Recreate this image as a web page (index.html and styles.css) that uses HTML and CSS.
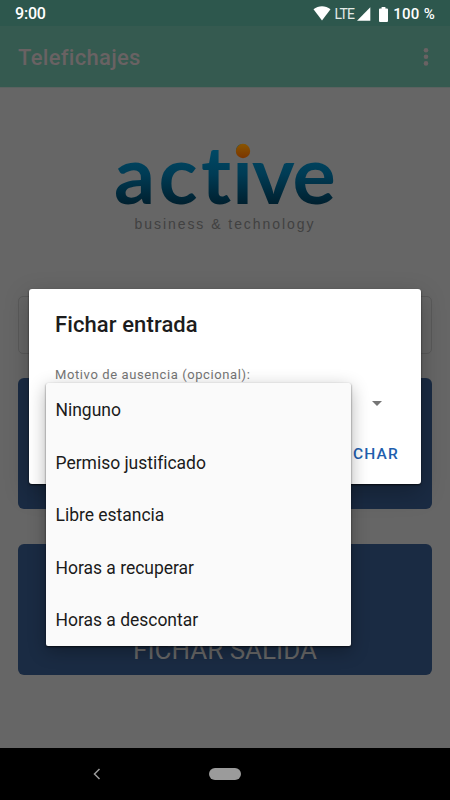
FILE: index.html
```html
<!DOCTYPE html>
<html lang="es">
<head>
  <meta charset="UTF-8">
  <title>Telefichajes</title>
  <link rel="stylesheet" href="styles.css">
</head>
<body>
  <div class="screen">

    <div class="status-bar">
      <span class="clock">9:00</span>
      <div class="status-icons">
        <svg class="wifi" width="18" height="15" viewBox="0 0 18 15"><path d="M0.5 3.3C5.5-0.7 12.5-0.7 17.5 3.3L9 14.5z" fill="#fff"/></svg>
        <span class="lte">LTE</span>
        <svg class="signal" width="14" height="14" viewBox="0 0 14 14"><path d="M13.3 0.3V13.7H0z" fill="#fff"/></svg>
        <svg class="battery" width="9" height="15" viewBox="0 0 9 15"><path d="M2.6 0h3.8v1.5H8q1 0 1 1V14q0 1-1 1H1q-1 0-1-1V2.500q0-1 1-1h1.600z" fill="#fff"/></svg>
        <span class="percent">100 %</span>
      </div>
    </div>

    <header class="app-bar">
      <h1>Telefichajes</h1>
      <svg width="6" height="20" viewBox="0 0 6 20" fill="#696263"><circle cx="3" cy="3.200" r="2.300"/><circle cx="3" cy="9.800" r="2.300"/><circle cx="3" cy="16.400" r="2.300"/></svg>
    </header>

    <main>
      <div class="logo">
        <svg width="240" height="75" viewBox="105 139 240 75">
          <defs>
            <linearGradient id="blue" gradientUnits="userSpaceOnUse" x1="0" y1="145" x2="0" y2="204">
              <stop offset="0" stop-color="#004c69"/>
              <stop offset="0.5" stop-color="#003b54"/>
              <stop offset="1" stop-color="#00202f"/>
            </linearGradient>
            <linearGradient id="orange" x1="0" y1="0" x2="0" y2="1">
              <stop offset="0" stop-color="#895500"/>
              <stop offset="1" stop-color="#7a3500"/>
            </linearGradient>
          </defs>
          <text class="wordmark" x="114 158.500 201 232.300 252 292.500" y="204" fill="url(#blue)">active</text>
          <circle cx="243" cy="151" r="7.200" fill="url(#orange)"/>
        </svg>
        <p>business &amp; technology</p>
      </div>

      <div class="field"></div>
      <button class="punch punch-in"></button>
      <button class="punch">FICHAR SALIDA</button>
    </main>

    <nav class="nav-bar">
      <svg width="8" height="12" viewBox="0 0 8 12"><path d="M6.500 1L1.500 6l5 5" fill="none" stroke="#9b9b9b" stroke-width="1.500"/></svg>
      <span class="home"></span>
    </nav>

    <!-- Diálogo -->
    <div class="dialog">
      <h2>Fichar entrada</h2>
      <label>Motivo de ausencia (opcional):</label>
      <span class="arrow"></span>
      <button class="accept">FICHAR</button>
    </div>

    <!-- Desplegable de motivos -->
    <ul class="options">
      <li>Ninguno</li>
      <li>Permiso justificado</li>
      <li>Libre estancia</li>
      <li>Horas a recuperar</li>
      <li>Horas a descontar</li>
    </ul>

  </div>
</body>
</html>
```
FILE: styles.css
```css
* { box-sizing: border-box; }
body { margin: 0; font-family: Roboto, sans-serif; }
h1, h2, p, ul { margin: 0; padding: 0; }
button { border: none; padding: 0; font-family: inherit; }
svg { display: block; flex: none; overflow: visible; }

.screen { position: relative; display: flex; flex-direction: column; width: 450px; height: 800px; overflow: hidden; background: #666; }

.status-bar { display: flex; justify-content: space-between; align-items: center; height: 26px; padding: 2px 15px 0; background: #2d574d; color: #fff; }
.clock { font-size: 16px; font-weight: 500; line-height: 24px; letter-spacing: -0.2px; }
.status-icons { display: flex; align-items: center; height: 24px; }
.lte { margin: 0 3px 0 4px; font-size: 14px; line-height: 22px; letter-spacing: -0.8px; color: #e3eae7; }
.battery { margin: 0 5px 0 8px; }
.percent { font-size: 15px; font-weight: 500; letter-spacing: 0.3px; }
.wifi { margin-top: -2px; }

.app-bar { display: flex; justify-content: space-between; align-items: center; height: 62px; padding: 0 21px 0 18px; background: #355a50; border-bottom: 1px solid #5a6260; }
.app-bar h1 { padding-top: 2px; font-size: 22px; font-weight: 500; letter-spacing: 0.3px; color: #696263; }

main { flex: 1; display: flex; flex-direction: column; padding: 51px 18px 0; }
.logo { display: flex; flex-direction: column; align-items: center; height: 157px; }
.wordmark { font-family: Lato, sans-serif; font-size: 81px; font-weight: 700; }
.logo p { margin-top: 1px; font-family: "Liberation Sans", sans-serif; font-size: 14px; line-height: 18px; letter-spacing: 1.95px; color: #414141; }
.field { flex: none; height: 58px; border: 1px solid #5a5a5a; border-radius: 5px; }
.punch { flex: none; height: 131px; margin-top: 35px; padding-top: 80px; border-radius: 6px; background: #1a2b43; font-size: 26px; color: #666; }
.punch-in { margin-top: 24px; }

.nav-bar { display: flex; align-items: center; height: 52px; padding-left: 93px; background: #000; }
.home { width: 32px; height: 12px; margin-left: 108px; border-radius: 6px; background: #9b9b9b; }

.dialog { position: absolute; left: 29px; top: 289px; display: flex; flex-direction: column; width: 392px; height: 195px; padding: 22px 22px 0 26px; border-radius: 3px; background: #fff; box-shadow: 0 1px 2px rgba(0,0,0,.7), 0 8px 24px rgba(0,0,0,.25); }
.dialog h2 { font-size: 22px; font-weight: 500; line-height: 28px; letter-spacing: 0.1px; color: #1c1c1c; }
.dialog label { margin-top: 27px; font-size: 13px; line-height: 18px; letter-spacing: 0.6px; color: #757575; }
.arrow { align-self: flex-end; margin: 17px 17px 0 0; border: 5.500px solid transparent; border-top-color: #757575; border-bottom: 0; }
.accept { align-self: flex-end; margin-top: 38px; background: none; font-size: 15.500px; font-weight: 500; line-height: 20px; letter-spacing: 1.2px; color: #1f5fae; }

.options { position: absolute; left: 46px; top: 383px; width: 305px; height: 263px; border-radius: 2px; background: #fafafa; box-shadow: 0 1px 2px rgba(0,0,0,.65), 0 5px 18px rgba(0,0,0,.3); list-style: none; }
.options li { height: 52.500px; padding-left: 9.500px; font-size: 17.500px; line-height: 54px; letter-spacing: -0.02px; color: #1b1b1b; }
```
